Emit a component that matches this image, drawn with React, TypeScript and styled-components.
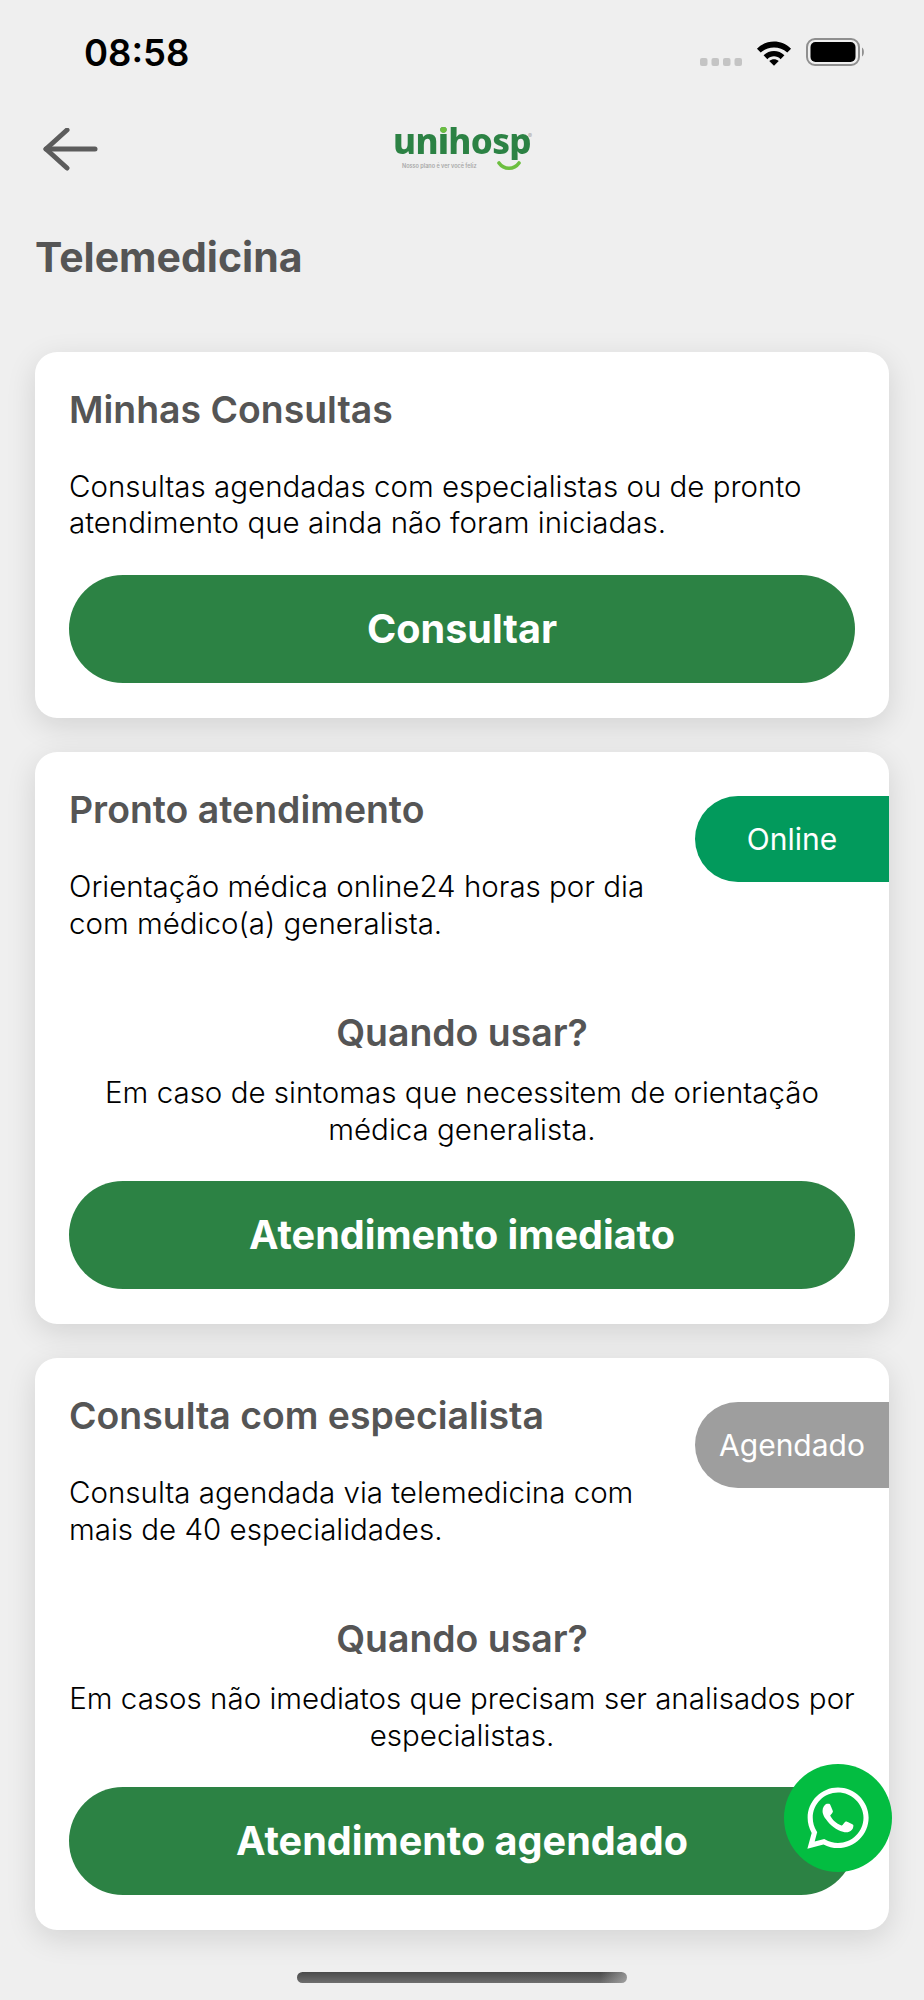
import React from 'react';
import styled, { createGlobalStyle } from 'styled-components';
import { FaWhatsapp } from 'react-icons/fa';

const Global = createGlobalStyle`
  html, body { margin: 0; padding: 0; background: #efefef; }
  * { box-sizing: border-box; }
  body { font-family: Inter, "Liberation Sans", sans-serif; }
`;

const Page = styled.div`
  position: relative;
  width: 924px;
  height: 2000px;
  overflow: hidden;
  background: #efefef;
`;

const StatusBar = styled.div`
  height: 105px;
  display: flex;
  align-items: flex-start;
  justify-content: space-between;
  padding: 31px 58px 0 84px;
`;

const Clock = styled.div`
  font-size: 36.5px;
  line-height: 44px;
  font-weight: 600;
  color: #000;
`;

const StatusIcons = styled.div`
  display: flex;
  align-items: center;
  gap: 14px;
  height: 42px;
`;

const SignalDots = styled.svg`
  margin-top: 20px;
`;

const Header = styled.div`
  position: relative;
  height: 86px;
  display: flex;
  align-items: center;
  justify-content: center;
`;

const BackButton = styled.div`
  position: absolute;
  left: 43px;
  top: 23px;
  width: 56px;
  height: 44px;
`;

const Logo = styled.div`
  position: relative;
  width: 140px;
  height: 48px;
  flex: none;
`;

const LogoWord = styled.div`
  position: absolute;
  left: 1px;
  top: -2px;
  height: 38px;
  font-family: "Noto Sans", sans-serif;
  font-size: 35px;
  line-height: 38px;
  font-weight: 800;
  letter-spacing: -0.6px;
  background: #2c8244;
  -webkit-background-clip: text;
  background-clip: text;
  color: transparent;
`;

const LogoI = styled.span`
  background: linear-gradient(#6cbf3f 0 37%, #2c8244 37%);
  -webkit-background-clip: text;
  background-clip: text;
  color: transparent;
`;

const LogoMark = styled.span`
  position: absolute;
  left: 136px;
  top: 8px;
  font-size: 6px;
  line-height: 8px;
  color: #a5a5a5;
`;

const LogoTag = styled.div`
  position: absolute;
  left: 10px;
  top: 38px;
  font-size: 5.5px;
  line-height: 8px;
  font-weight: 600;
  color: #a8a8a8;
  white-space: nowrap;
`;

const LogoSmile = styled.svg`
  position: absolute;
  left: 105px;
  top: 37px;
`;

const PageTitle = styled.h1`
  margin: 0;
  padding: 42px 35px 0;
  height: 161px;
  font-size: 41px;
  line-height: 48px;
  font-weight: 700;
  color: #555;
`;

const Cards = styled.div`
  display: flex;
  flex-direction: column;
  gap: 34.5px;
  padding: 0 35px;
`;

const Card = styled.section`
  position: relative;
  background: #fff;
  border-radius: 22px;
  padding: 36px 34px 35px;
  box-shadow: 0 8px 30px rgba(0, 0, 0, 0.12);
`;

const CardTitle = styled.h2`
  margin: 0;
  font-size: 37.4px;
  line-height: 44px;
  font-weight: 600;
  color: #555;
`;

const Body = styled.p<{ $center?: boolean; $narrow?: boolean }>`
  margin: 0;
  font-size: 29.5px;
  line-height: 36.4px;
  font-weight: 300;
  color: #000;
  text-align: ${(p) => (p.$center ? 'center' : 'left')};
  ${(p) => (p.$narrow ? 'max-width: 600px;' : '')}
`;

const Intro = styled(Body)`
  margin-top: 36px;
`;

const WhenBlock = styled.div`
  margin-top: 70px;
  display: flex;
  flex-direction: column;
  align-items: center;
  gap: 19px;
`;

const WhenTitle = styled.h3`
  margin: 0;
  font-size: 37.4px;
  line-height: 44px;
  font-weight: 600;
  color: #555;
`;

const ActionButton = styled.div`
  margin-top: 34px;
  height: 108px;
  border-radius: 54px;
  background: #2c8244;
  color: #fff;
  display: flex;
  align-items: center;
  justify-content: center;
  font-size: 39.6px;
  font-weight: 700;
`;

const Pill = styled.div<{ $bg: string }>`
  position: absolute;
  right: 0;
  top: 44px;
  width: 194px;
  height: 86px;
  border-radius: 43px 0 0 43px;
  background: ${(p) => p.$bg};
  color: #fff;
  font-size: 30px;
  display: flex;
  align-items: center;
  justify-content: center;
`;

const WhatsApp = styled.div`
  position: absolute;
  left: 784px;
  top: 1764px;
  width: 108px;
  height: 108px;
  border-radius: 50%;
  background: #03bd41;
  color: #fff;
  display: flex;
  align-items: center;
  justify-content: center;
  font-size: 70px;
`;

const HomeBar = styled.div`
  position: absolute;
  left: 297px;
  top: 1972px;
  width: 330px;
  height: 11px;
  border-radius: 6px;
  background: linear-gradient(90deg, transparent 92%, rgba(239, 239, 239, 0.4)), linear-gradient(#4a4a4a, #6e6e6e);
`;

export default function App() {
  return (
    <Page>
      <Global />
      <StatusBar>
        <Clock>08:58</Clock>
        <StatusIcons>
          <SignalDots width="42" height="10" viewBox="0 0 42 10">
            <g fill="#c4c4c4">
              <rect x="0" y="1" width="7.5" height="8" rx="2" />
              <rect x="11.5" y="1" width="7.5" height="8" rx="2" />
              <rect x="23" y="1" width="7.5" height="8" rx="2" />
              <rect x="34.5" y="1" width="7.5" height="8" rx="2" />
            </g>
          </SignalDots>
          <svg width="36" height="27" viewBox="0 0 38 28">
            <path d="M1 10 C11 0 27 0 37 10 L33 14 C25 7 13 7 5 14 Z" fill="#000" />
            <path d="M8 17 C14 11 24 11 30 17 L26 21 C22 17 16 17 12 21 Z" fill="#000" />
            <path d="M14 23 C17 20.5 21 20.5 24 23 L19 28 Z" fill="#000" />
          </svg>
          <svg width="60" height="30" viewBox="0 0 60 30">
            <rect x="1" y="2" width="52" height="26" rx="8" fill="none" stroke="#8f8f8f" strokeWidth="2" />
            <rect x="4.5" y="5" width="45" height="20" rx="5" fill="#000" />
            <path d="M56 10.5 C58.5 11.5 58.5 18.5 56 19.5 Z" fill="#8f8f8f" />
          </svg>
        </StatusIcons>
      </StatusBar>
      <Header>
        <BackButton>
          <svg width="56" height="44" viewBox="0 0 56 44" fill="none" stroke="#5c5c5c" strokeWidth="5" strokeLinecap="round" strokeLinejoin="round">
            <path d="M3 21 H52" />
            <path d="M24 2 L3 21 L24 40" />
          </svg>
        </BackButton>
        <Logo>
          <LogoWord>un<LogoI>i</LogoI>hosp</LogoWord>
          <LogoMark>®</LogoMark>
          <LogoTag>Nosso plano é ver você feliz</LogoTag>
          <LogoSmile width="24" height="10" viewBox="0 0 24 10">
            <path d="M2 2 C7 9 17 9 22 2" fill="none" stroke="#6cbf3f" strokeWidth="3.6" strokeLinecap="round" />
          </LogoSmile>
        </Logo>
      </Header>
      <PageTitle>Telemedicina</PageTitle>
      <Cards>
        <Card>
          <CardTitle>Minhas Consultas</CardTitle>
          <Intro>Consultas agendadas com especialistas ou de pronto atendimento que ainda não foram iniciadas.</Intro>
          <ActionButton>Consultar</ActionButton>
        </Card>
        <Card>
          <CardTitle>Pronto atendimento</CardTitle>
          <Pill $bg="#029a5c">Online</Pill>
          <Intro $narrow>Orientação médica online24 horas por dia com médico(a) generalista.</Intro>
          <WhenBlock>
            <WhenTitle>Quando usar?</WhenTitle>
            <Body $center>Em caso de sintomas que necessitem de orientação médica generalista.</Body>
          </WhenBlock>
          <ActionButton>Atendimento imediato</ActionButton>
        </Card>
        <Card>
          <CardTitle>Consulta com especialista</CardTitle>
          <Pill $bg="#9e9e9e">Agendado</Pill>
          <Intro $narrow>Consulta agendada via telemedicina com mais de 40 especialidades.</Intro>
          <WhenBlock>
            <WhenTitle>Quando usar?</WhenTitle>
            <Body $center>Em casos não imediatos que precisam ser analisados por especialistas.</Body>
          </WhenBlock>
          <ActionButton>Atendimento agendado</ActionButton>
        </Card>
      </Cards>
      <WhatsApp><FaWhatsapp /></WhatsApp>
      <HomeBar />
    </Page>
  );
}
